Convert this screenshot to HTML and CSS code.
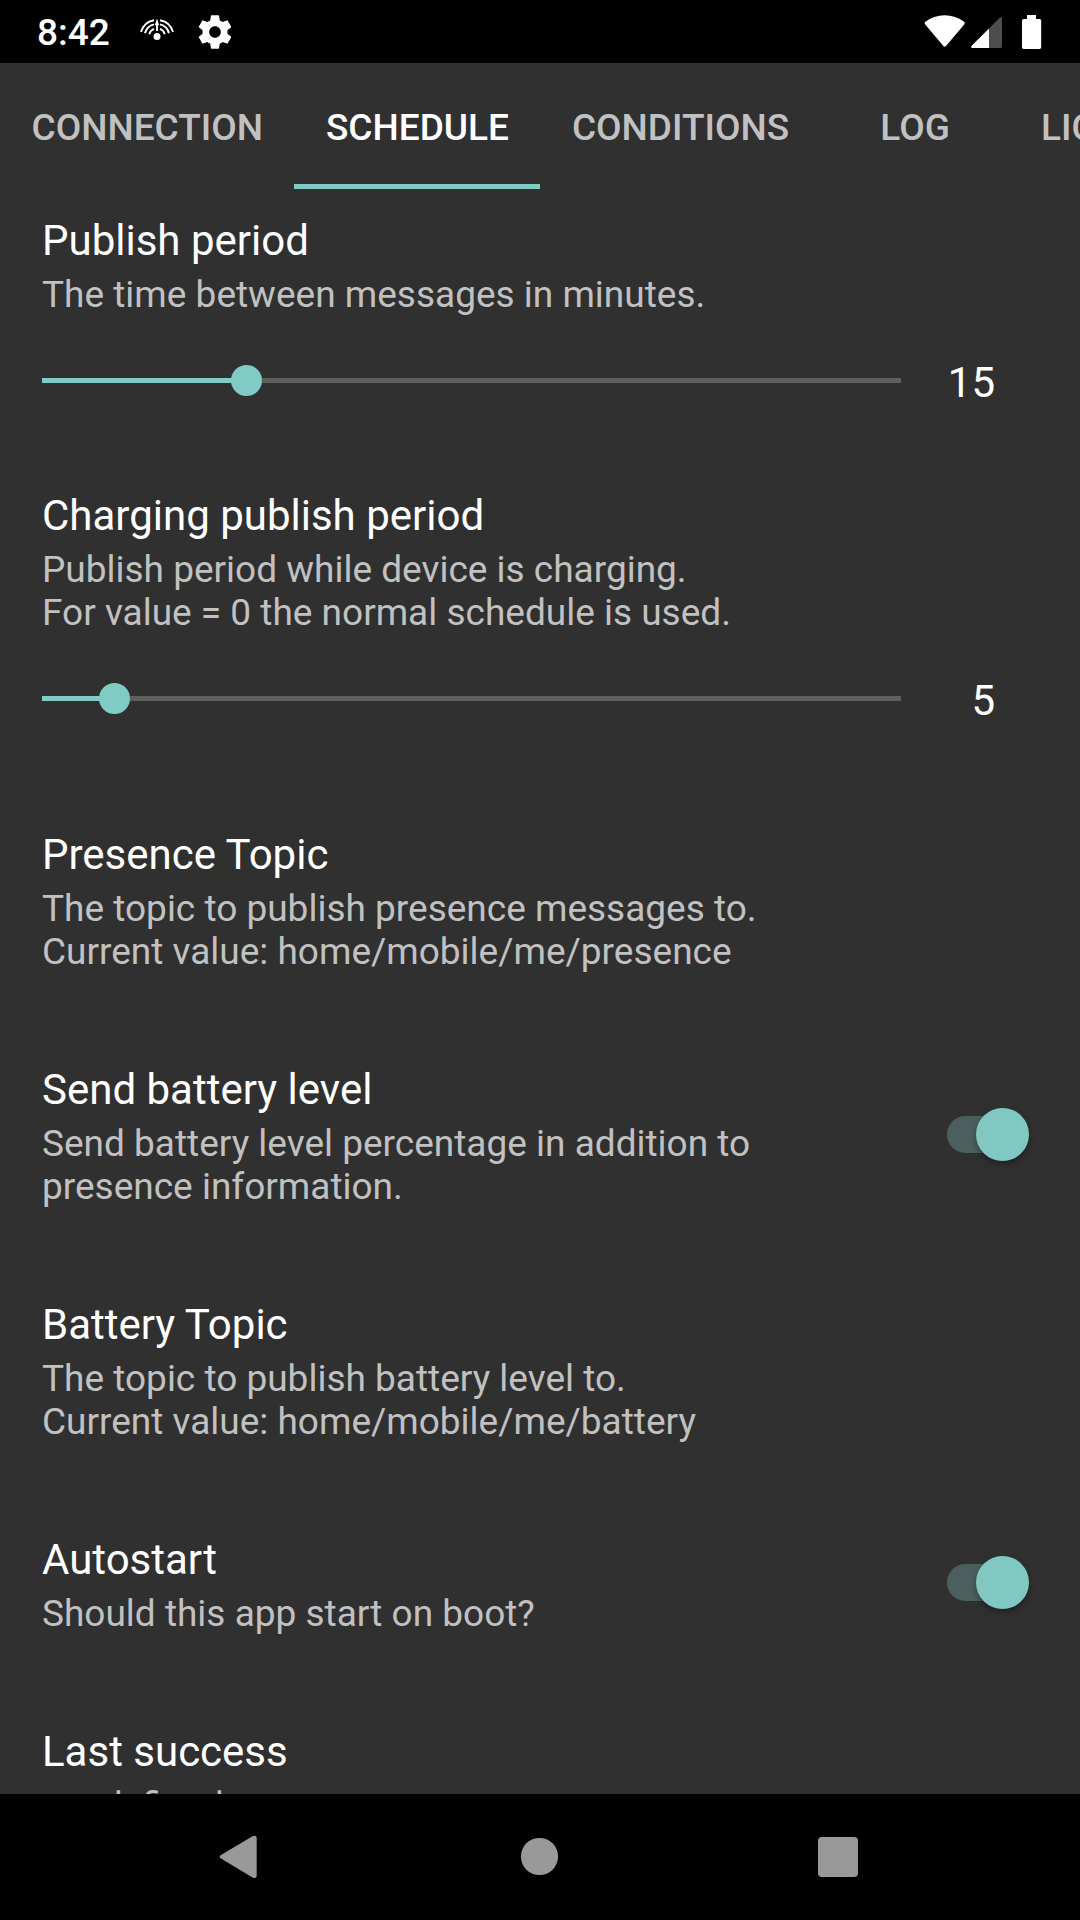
FILE: index.html
```html
<!DOCTYPE html>
<html lang="en">
<head>
<meta charset="utf-8">
<title>Schedule</title>
<link rel="stylesheet" href="styles.css">
</head>
<body>
<div class="screen">
  <header class="status">
    <span class="clock">8:42</span>
    <svg class="presence-icon" width="36" height="24" viewBox="139 17 36 24" fill="none" stroke="#fff" stroke-width="1.9">
      <path d="M141 32A16.6 16.6 0 0 1 154 20.2M160 20.2A16.6 16.6 0 0 1 173 32"/>
      <path d="M145 33.2A12.5 12.5 0 0 1 154 24.4M160 24.4A12.5 12.5 0 0 1 169 33.2"/>
      <path d="M149.2 34.3A8.2 8.2 0 0 1 154 28.9M160 28.9A8.2 8.2 0 0 1 164.8 34.3"/>
      <path d="M157 31v-9"/>
      <path d="M157 18.6l2.2 6.6h-4.4z" fill="#fff" stroke="none"/>
      <circle cx="157" cy="36.6" r="3.5" fill="#fff" stroke="none"/>
    </svg>
    <svg class="gear-icon" width="40" height="40" viewBox="0 0 24 24" fill="#fff">
      <path d="M19.43 12.98c.04-.32.07-.64.07-.98s-.03-.66-.07-.98l2.11-1.65c.19-.15.24-.42.12-.64l-2-3.46c-.12-.22-.39-.3-.61-.22l-2.49 1c-.52-.4-1.08-.73-1.69-.98l-.38-2.65C14.46 2.18 14.25 2 14 2h-4c-.25 0-.46.18-.49.42l-.38 2.65c-.61.25-1.17.59-1.69.98l-2.49-1c-.23-.09-.49 0-.61.22l-2 3.46c-.13.22-.07.49.12.64l2.11 1.65c-.04.32-.07.65-.07.98s.03.66.07.98l-2.11 1.65c-.19.15-.24.42-.12.64l2 3.46c.12.22.39.3.61.22l2.49-1c.52.4 1.08.73 1.69.98l.38 2.65c.03.24.24.42.49.42h4c.25 0 .46-.18.49-.42l.38-2.65c.61-.25 1.17-.59 1.69-.98l2.49 1c.23.09.49 0 .61-.22l2-3.46c.12-.22.07-.49-.12-.64l-2.11-1.65zM12 15.5c-1.93 0-3.5-1.57-3.5-3.5s1.57-3.5 3.5-3.5 3.5 1.57 3.5 3.5-1.57 3.5-3.5 3.5z"/>
    </svg>
    <svg class="system-icons" width="120" height="40" viewBox="922 11 120 40" fill="#fff">
      <path d="M925 23.2Q924 21.8 925.4 20.8Q933.8 14.3 944.7 14.3T964 20.8Q965.4 21.8 964.4 23.2L946 44.9Q944.7 46.4 943.4 44.9Z"/>
      <path d="M989 27.5V47H972.5Q970.2 46.6 971.6 44.8Z"/>
      <path d="M989 27.5L999.6 16.7Q1002 15 1002 18V45.5Q1002 47 1000.5 47H989Z" fill="#4d4d4d"/>
      <path d="M1027 14h9v4h3.5q1.7 0 1.7 1.7v26.6q0 1.7-1.7 1.7h-15.8q-1.7 0-1.7-1.7V19.7q0-1.7 1.7-1.7h3.3z"/>
    </svg>
  </header>

  <nav class="tabs">
    <span class="tab">CONNECTION</span>
    <span class="tab active">SCHEDULE</span>
    <span class="tab">CONDITIONS</span>
    <span class="tab">LOG</span>
    <span class="tab">LICENSE</span>
  </nav>

  <main class="list">
    <section class="seek-pref">
      <h2 class="title">Publish period</h2>
      <p class="summary">The time between messages in minutes.</p>
      <div class="seek">
        <div class="track"><div class="fill" style="width:204.5px"></div><div class="knob"></div></div>
        <span class="value">15</span>
      </div>
    </section>
    <section class="seek-pref">
      <h2 class="title">Charging publish period</h2>
      <p class="summary">Publish period while device is charging.<br>For value = 0 the normal schedule is used.</p>
      <div class="seek">
        <div class="track"><div class="fill" style="width:72.5px"></div><div class="knob"></div></div>
        <span class="value">5</span>
      </div>
    </section>
    <section class="pref">
      <div>
        <h2 class="title">Presence Topic</h2>
        <p class="summary">The topic to publish presence messages to.<br>Current value: home/mobile/me/presence</p>
      </div>
    </section>
    <section class="pref">
      <div>
        <h2 class="title">Send battery level</h2>
        <p class="summary">Send battery level percentage in addition to<br>presence information.</p>
      </div>
      <div class="switch"><div class="thumb"></div></div>
    </section>
    <section class="pref">
      <div>
        <h2 class="title">Battery Topic</h2>
        <p class="summary">The topic to publish battery level to.<br>Current value: home/mobile/me/battery</p>
      </div>
    </section>
    <section class="pref">
      <div>
        <h2 class="title">Autostart</h2>
        <p class="summary">Should this app start on boot?</p>
      </div>
      <div class="switch"><div class="thumb"></div></div>
    </section>
    <section class="pref">
      <div>
        <h2 class="title">Last success</h2>
        <p class="summary">&lt;undefined&gt;</p>
      </div>
    </section>
  </main>

  <footer class="navbar">
    <svg width="60" height="60" viewBox="210 1827 60 60"><path d="M221 1858.6Q218.400 1856.800 221 1855L252.500 1836.300Q256.700 1834.500 256.700 1838.500V1875.300Q256.700 1879.300 252.500 1877.500Z" fill="#999"/></svg>
    <svg width="60" height="60" viewBox="510 1827 60 60"><circle cx="539.5" cy="1856.500" r="18.600" fill="#999"/></svg>
    <svg width="60" height="60" viewBox="810 1827 60 60"><rect x="818" y="1837" width="40" height="40" rx="4" fill="#999"/></svg>
  </footer>
</div>
</body>
</html>
```
FILE: styles.css
```css
* { box-sizing: border-box; }

body {
  margin: 0;
  background: #303030;
  font-family: Roboto, sans-serif;
  color: #fff;
}

.screen {
  width: 1080px;
  height: 1920px;
  display: flex;
  flex-direction: column;
  overflow: hidden;
}

.status {
  height: 63px;
  flex: none;
  display: flex;
  align-items: center;
  padding: 0 38px 0 37px;
  background: #000;
}

.clock {
  width: 102px;
  font-size: 37px;
  line-height: 43px;
  font-weight: 500;
  padding-top: 2px;
}

.presence-icon { margin-bottom: 5px; }
.gear-icon { margin-left: 20px; }
.system-icons { margin-left: auto; }

.tabs {
  height: 126px;
  flex: none;
  display: flex;
  overflow: hidden;
}

.tab {
  flex: none;
  min-width: 189px;
  padding: 43px 31.5px 0;
  text-align: center;
  font-size: 37px;
  line-height: 43px;
  font-weight: 500;
  color: #c1c1c1;
}

.tab.active {
  color: #fff;
  border-bottom: 5px solid #80cbc4;
}

.list {
  flex: 1;
  min-height: 0;
  overflow: hidden;
}

.title {
  margin: 0 0 7px;
  font-size: 42px;
  line-height: 50px;
  font-weight: 400;
}

.summary {
  margin: 0;
  font-size: 37px;
  line-height: 43px;
  color: #c1c1c1;
}

.seek-pref { padding: 27px 42px 0; }

.seek {
  display: flex;
  align-items: center;
  height: 129px;
  margin-bottom: 19px;
}

.track {
  display: flex;
  align-items: center;
  width: 859px;
  height: 5px;
  background: #5e5e5e;
}

.fill {
  height: 5px;
  background: #80cbc4;
}

.knob {
  flex: none;
  width: 31px;
  height: 31px;
  margin-left: -15.5px;
  border-radius: 50%;
  background: #80cbc4;
}

.value {
  width: 94px;
  padding-top: 5px;
  text-align: right;
  font-size: 42px;
  line-height: 50px;
}

.pref {
  display: flex;
  justify-content: space-between;
  align-items: center;
  padding: 48px 51px 44px 42px;
}

.switch {
  display: flex;
  align-items: center;
  justify-content: flex-end;
  width: 82px;
  height: 37px;
  margin-top: -5px;
  border-radius: 19px;
  background: linear-gradient(to right, #4b605e 0 60px, transparent 60px);
}

.thumb {
  flex: none;
  width: 53px;
  height: 53px;
  border-radius: 50%;
  background: #80c8c1;
  box-shadow: 0 3px 6px rgba(0, 0, 0, .35);
}

.navbar {
  height: 126px;
  flex: none;
  display: flex;
  justify-content: center;
  align-items: center;
  gap: 240px;
  background: #000;
}
```
